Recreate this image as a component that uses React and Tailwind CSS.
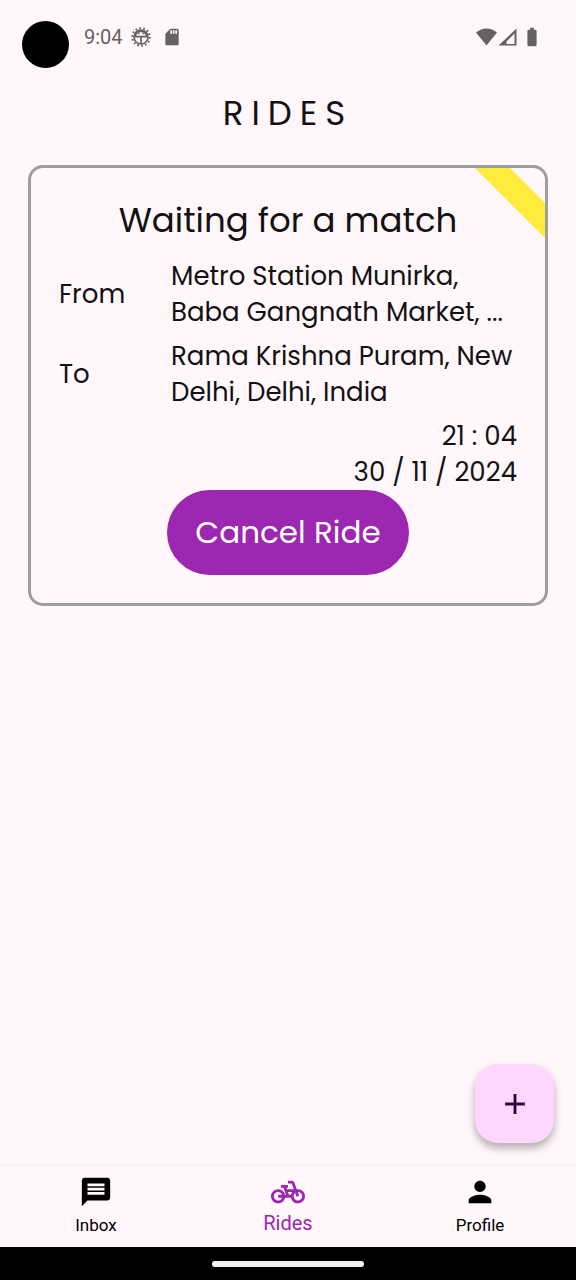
import { MdAdd, MdBatteryFull, MdMessage, MdPedalBike, MdPerson, MdSdCard } from "react-icons/md";

function DebugIcon() {
  return (
    <svg viewBox="0 0 20 20" className="size-5" fill="none" stroke="currentColor" aria-hidden="true">
      <circle cx="10" cy="10" r="7" strokeWidth="1.6" />
      <circle cx="10" cy="10" r="8.800" strokeWidth="2" strokeDasharray="1.700 2.250" />
      <path fill="currentColor" fillRule="evenodd" stroke="none" d="M3 10.500A7 7 0 0 1 17 10.500ZM5.200 8.800H14.800A5 5 0 0 0 5.200 8.800Z" />
      <path d="M10 10v7" strokeWidth="1.700" />
      <path d="M7.200 6.600h1.300M11.500 6.600h1.300" strokeWidth="1.200" />
    </svg>
  );
}

function StatusBar() {
  return (
    <header className="flex items-start pt-[21px] pr-[37px] pl-[22px] font-['Roboto',sans-serif] text-[#656165]">
      <span className="size-[47px] rounded-full bg-black" />
      <div className="ml-[15px] flex h-8 flex-1 items-center gap-2">
        <time className="text-xl leading-8">9:04</time>
        <DebugIcon />
        <MdSdCard className="ml-[3px] size-5" aria-hidden="true" />
      </div>
      <div className="flex h-8 items-center gap-[3px]">
        <svg viewBox="0 0 42 18" className="h-[18px] w-[42px]" fill="currentColor" aria-hidden="true">
          <path d="M0 4.500Q10.500-3.500 21 4.500L10.500 17.500Z" />
          <path fillRule="evenodd" d="M22.500 17.500 40.500 0.500V17.500ZM30.500 16H38.500V5.500L30.500 13.500Z" />
        </svg>
        <MdBatteryFull className="-mr-1 size-[22px]" aria-hidden="true" />
      </div>
    </header>
  );
}

function Place({ label, children }) {
  return (
    <div className="flex items-center">
      <dt className="w-28 shrink-0">{label}</dt>
      <dd className="line-clamp-2 min-w-0 flex-1">{children}</dd>
    </div>
  );
}

function RideCard() {
  return (
    <section className="relative mx-7 overflow-hidden rounded-[15px] border-3 border-[#9e9e9e] p-7 text-[#131114]">
      <svg viewBox="0 0 72 72" className="absolute top-0 right-0 size-[72px]" aria-hidden="true">
        <path d="M2 0H37L72 35V70Z" fill="#ffeb3b" />
      </svg>
      <h2 className="text-center text-[34px] leading-12">Waiting for a match</h2>
      <dl className="mt-3.5 flex flex-col gap-2 text-[26px] leading-9">
        <Place label="From">Metro Station Munirka, Baba Gangnath Market, ...</Place>
        <Place label="To">Rama Krishna Puram, New Delhi, Delhi, India</Place>
      </dl>
      <div className="mt-2 text-right text-[26px] leading-9">
        <p>21 : 04</p>
        <p>30 / 11 / 2024</p>
      </div>
      <button
        type="button"
        className="mx-auto block h-[85px] rounded-full bg-[#9c27b0] px-7 text-[31px] text-white"
      >
        Cancel Ride
      </button>
    </section>
  );
}

function Tab({ icon: Icon, label, active }) {
  return (
    <a
      href={"#" + label.toLowerCase()}
      aria-current={active ? "page" : undefined}
      className={
        active
          ? "flex flex-1 flex-col items-center pt-[9px] text-xl leading-6 text-[#9c27b0]"
          : "flex flex-1 flex-col items-center pt-[9px] text-[17px] leading-7 text-black"
      }
    >
      <Icon className="size-[34px]" aria-hidden="true" />
      <span className="mt-0.5">{label}</span>
    </a>
  );
}

export default function App() {
  return (
    <div className="flex min-h-screen flex-col bg-[#fff7fa] font-['Poppins','Inter',sans-serif]">
      <StatusBar />
      <main className="relative flex-1">
        <h1 className="mt-[21px] mb-7 text-center text-[34px] leading-12 tracking-[8px] text-[#131114]">
          RIDES
        </h1>
        <RideCard />
        <button
          type="button"
          aria-label="Add ride"
          className="absolute right-[22px] bottom-[21px] flex size-[79px] items-center justify-center rounded-[23px] bg-[#ffd6fe] text-[#36003c] shadow-[0_5px_9px_rgba(0,0,0,0.3)]"
        >
          <MdAdd className="size-[34px]" aria-hidden="true" />
        </button>
      </main>
      <nav className="flex h-[83px] border-t-2 border-[#f9eef3] font-['Roboto',sans-serif]">
        <Tab icon={MdMessage} label="Inbox" />
        <Tab icon={MdPedalBike} label="Rides" active />
        <Tab icon={MdPerson} label="Profile" />
      </nav>
      <footer className="flex h-[33px] items-center justify-center bg-black">
        <span className="h-[6px] w-[152px] rounded-full bg-[#f3eef1]" />
      </footer>
    </div>
  );
}
